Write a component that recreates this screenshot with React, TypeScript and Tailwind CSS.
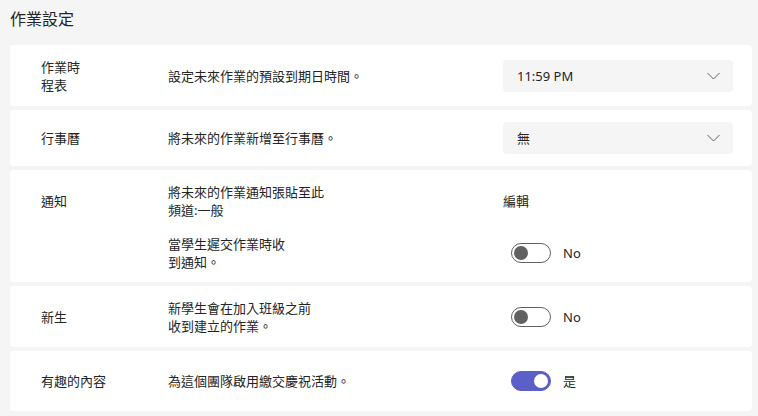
import React, { useState } from "react";

const font = "font-['Noto_Sans','Noto_Sans_CJK_TC',sans-serif]";

// 下拉選單
const Dropdown = ({ value }: { value: string }) => (
  <div className="flex h-8 w-[230px] items-center justify-between rounded bg-[#f5f5f5] pl-[14px] pr-[13px]">
    <span className="text-[13px] text-[#242424]">{value}</span>
    <svg width="13" height="8" viewBox="0 0 13 8" fill="none">
      <path d="M0.5 1L6.5 7L12.5 1" stroke="#616161" strokeWidth="1" />
    </svg>
  </div>
);

// 開關
const Toggle = ({ on, label, onClick }: { on: boolean; label: string; onClick: () => void }) => (
  <div className="ml-2 flex items-center gap-3">
    <button
      onClick={onClick}
      className={`flex h-5 w-10 items-center rounded-full border px-[2px] ${
        on ? "justify-end border-[#5b5fc7] bg-[#5b5fc7]" : "justify-start border-[#616161] bg-white"
      }`}
    >
      <span className={`h-[14px] w-[14px] rounded-full ${on ? "bg-white" : "bg-[#616161]"}`} />
    </button>
    <span className="text-[13px] text-[#242424]">{label}</span>
  </div>
);

const Row = ({ label, desc, control, className = "" }: { label?: React.ReactNode; desc: React.ReactNode; control: React.ReactNode; className?: string }) => (
  <div className={`grid grid-cols-[127px_335px_1fr] items-center ${className}`}>
    <div>{label}</div>
    <div>{desc}</div>
    <div>{control}</div>
  </div>
);

export default function App() {
  const [late, setLate] = useState(false);
  const [newStudents, setNewStudents] = useState(false);
  const [fun, setFun] = useState(true);

  return (
    <div className={`min-h-[416px] w-[758px] bg-[#f5f5f5] pl-[10px] pr-[6px] pt-[7px] text-[13px] leading-[18px] text-[#242424] ${font}`}>
      <h1 className="mb-[14px] text-[16px] leading-[24px]">作業設定</h1>

      <div className="flex flex-col gap-1">
        <div className="flex min-h-[61px] items-center rounded bg-white pl-[31px] py-3">
          <Row label={<>作業時<br />程表</>} desc="設定未來作業的預設到期日時間。" control={<Dropdown value="11:59 PM" />} />
        </div>

        <div className="flex min-h-[56px] items-center rounded bg-white pl-[31px] py-3">
          <Row label="行事曆" desc="將未來的作業新增至行事曆。" control={<Dropdown value="無" />} />
        </div>

        <div className="flex min-h-[112px] flex-col justify-center gap-4 rounded bg-white pl-[31px] pt-[13px] pb-[11px]">
          <Row label="通知" desc={<>將未來的作業通知張貼至此<br />頻道:一般</>} control={<span className="cursor-pointer">編輯</span>} />
          <Row desc={<>當學生遲交作業時收<br />到通知。</>} control={<Toggle on={late} label="No" onClick={() => setLate(!late)} />} />
        </div>

        <div className="flex min-h-[61px] items-center rounded bg-white pl-[31px] py-3">
          <Row label="新生" desc={<>新學生會在加入班級之前<br />收到建立的作業。</>} control={<Toggle on={newStudents} label="No" onClick={() => setNewStudents(!newStudents)} />} />
        </div>

        <div className="flex min-h-[60px] items-center rounded bg-white pl-[31px] py-3">
          <Row label="有趣的內容" desc="為這個團隊啟用繳交慶祝活動。" control={<Toggle on={fun} label="是" onClick={() => setFun(!fun)} />} />
        </div>
      </div>
    </div>
  );
}
